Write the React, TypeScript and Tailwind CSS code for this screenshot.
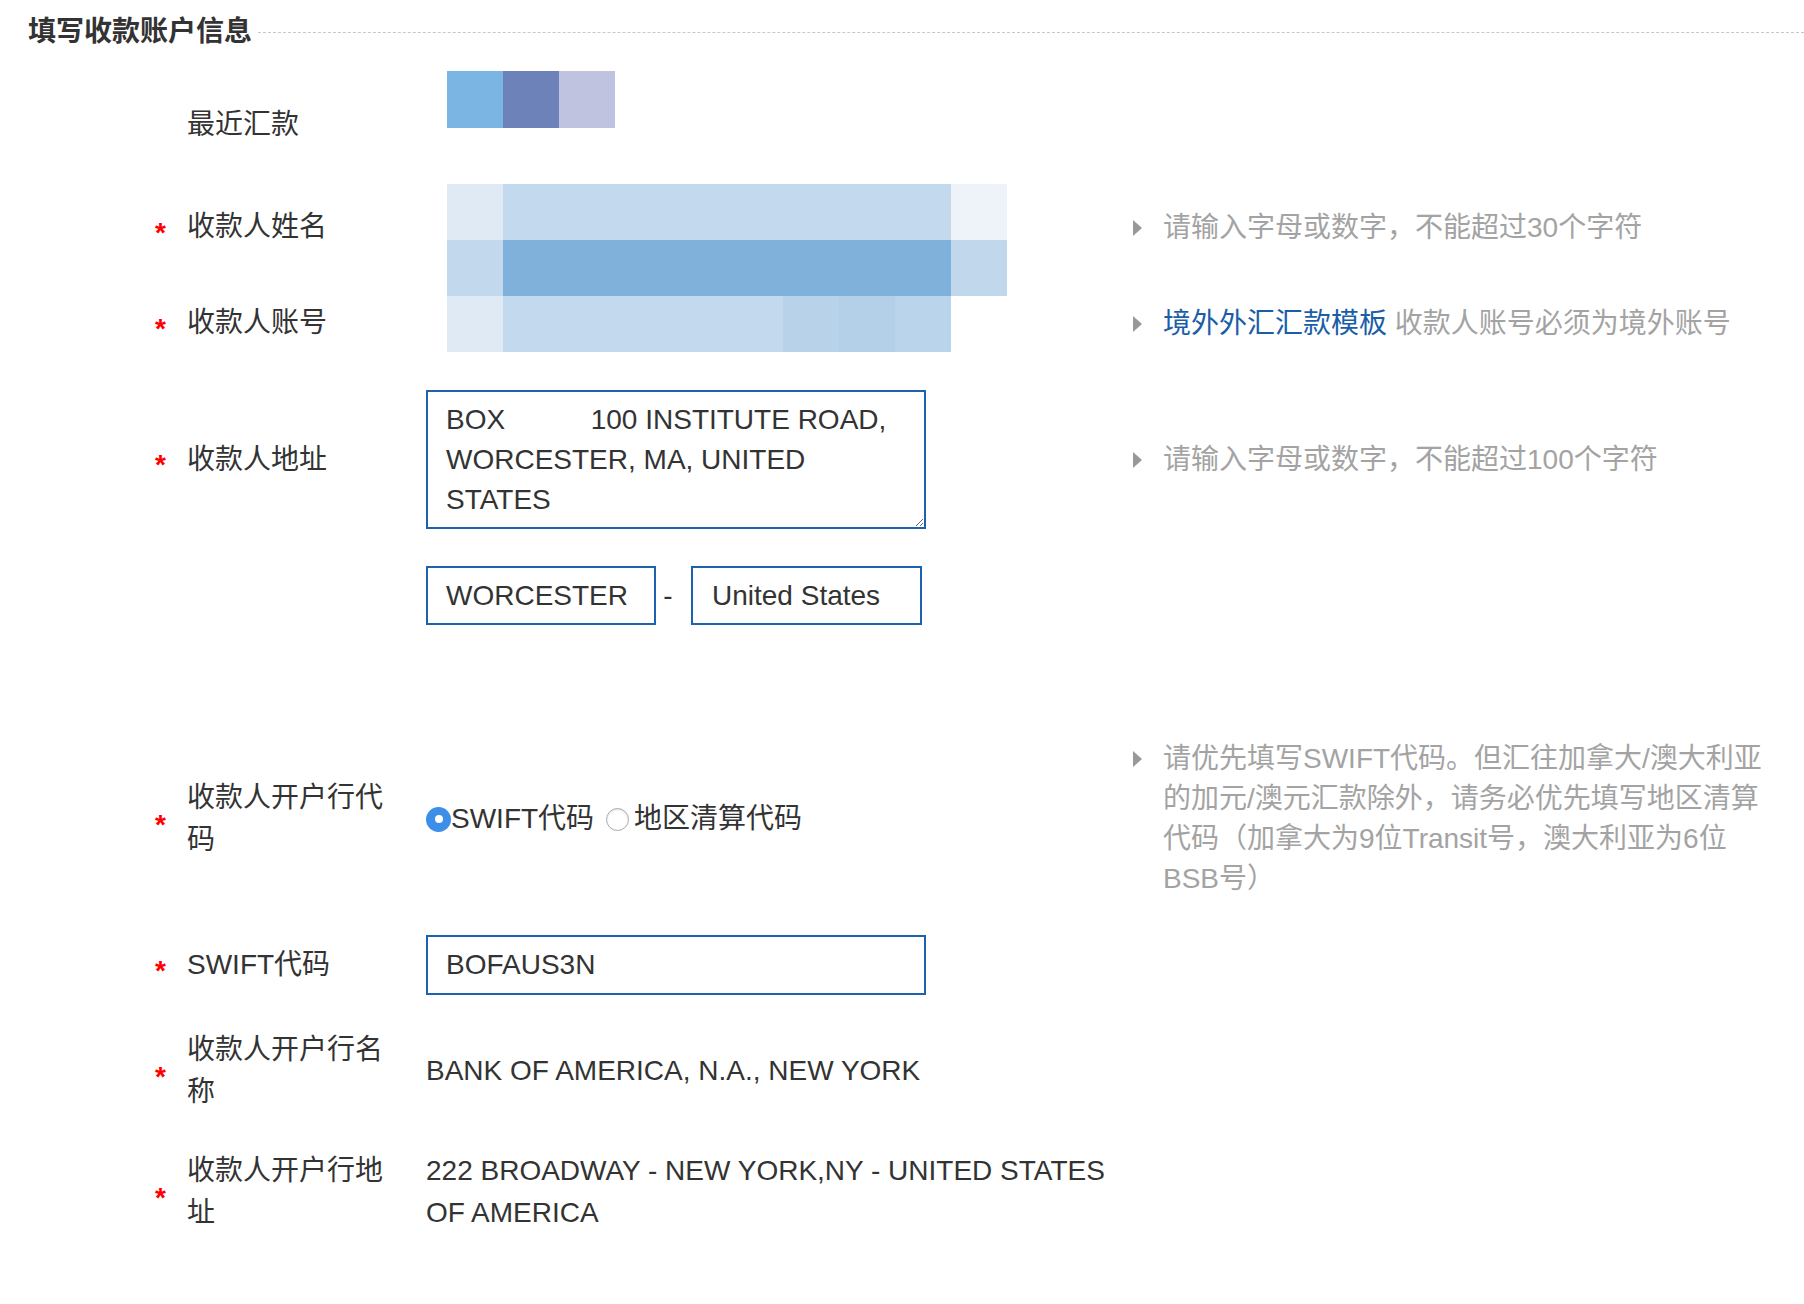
import React from 'react';

const Star = ({ show = true }: { show?: boolean }) => (
  <span className="w-[32px] shrink-0 pt-[11px] text-[28px] font-bold leading-none text-[#f00]">{show ? '*' : ''}</span>
);

const Label: React.FC<{ children?: React.ReactNode }> = ({ children }) => (
  <div className="w-[239px] shrink-0 pr-[39px] text-[28px] leading-[42px] text-[#333]">{children}</div>
);

const Hint: React.FC<{ children?: React.ReactNode }> = ({ children }) => (
  <div className="flex items-start">
    <div className="flex h-[40px] w-[30px] shrink-0 items-center">
      <span className="h-0 w-0 border-y-[8px] border-l-[9px] border-y-transparent border-l-[#999]" />
    </div>
    <div className="whitespace-nowrap text-[28px] leading-[40px] text-[#a3a3a3]">{children}</div>
  </div>
);

// blurred cells covering the payee name / account fields
const blurRows = [
  ['bg-[#dfeaf5]', 'bg-[#c2d9ee]', 'bg-[#c2d9ee]', 'bg-[#c2d9ee]', 'bg-[#c2d9ee]', 'bg-[#c2d9ee]', 'bg-[#c2d9ee]', 'bg-[#c2d9ee]', 'bg-[#c2d9ee]', 'bg-[#edf3f9]'],
  ['bg-[#c2d8ed]', 'bg-[#80b1da]', 'bg-[#80b1da]', 'bg-[#80b1da]', 'bg-[#80b1da]', 'bg-[#80b1da]', 'bg-[#80b1da]', 'bg-[#80b1da]', 'bg-[#80b1da]', 'bg-[#c0d7ec]'],
  ['bg-[#dfeaf5]', 'bg-[#c2d9ee]', 'bg-[#c2d9ee]', 'bg-[#c2d9ee]', 'bg-[#c2d9ee]', 'bg-[#c2d9ee]', 'bg-[#b8d2ea]', 'bg-[#b4d0e9]', 'bg-[#bad4eb]', 'bg-white'],
];

export default function App() {
  return (
    <div className="min-h-[1304px] w-full bg-white pb-[60px] font-['Liberation_Sans','Noto_Sans_CJK_SC',sans-serif] text-[#333]">
      {/* Section title */}
      <div className="flex items-center pl-[28px] pt-[12px]">
        <h2 className="text-[28px] font-bold leading-[40px] text-[#333]">填写收款账户信息</h2>
        <div className="ml-[6px] flex-1 border-t border-dashed border-[#c8c8c8]" />
      </div>

      <div className="pl-[155px]">
        {/* Recent payees */}
        <div className="mt-[19px] flex items-start">
          <Star show={false} />
          <div className="mt-[33px]">
            <Label>最近汇款</Label>
          </div>
          <div className="ml-[21px] flex">
            <div className="h-[57px] w-[56px] bg-[#7ab5e3]" />
            <div className="h-[57px] w-[56px] bg-[#6c82b8]" />
            <div className="h-[57px] w-[56px] bg-[#c0c3e0]" />
          </div>
        </div>

        {/* Payee name + account (blurred) */}
        <div className="mt-[38px] flex">
          <div className="flex flex-col gap-[54px] pt-[22px]">
            <div className="flex items-center">
              <Star />
              <Label>收款人姓名</Label>
            </div>
            <div className="flex items-center">
              <Star />
              <Label>收款人账号</Label>
            </div>
          </div>
          <div className="w-[707px] shrink-0">
            <div className="ml-[21px] flex flex-col">
              {blurRows.map((row, r) => (
                <div key={r} className="flex">
                  {row.map((c, i) => (
                    <div key={i} className={`h-[56px] w-[56px] ${c}`} />
                  ))}
                </div>
              ))}
            </div>
          </div>
          <div className="flex flex-col gap-[56px] pt-[24px]">
            <Hint>请输入字母或数字，不能超过30个字符</Hint>
            <Hint>
              <span className="text-[#1a5ea8]">境外外汇汇款模板</span> 收款人账号必须为境外账号
            </Hint>
          </div>
        </div>

        {/* Address */}
        <div className="mt-[38px] flex items-center">
          <Star />
          <Label>收款人地址</Label>
          <div className="w-[707px] shrink-0">
            <textarea
              readOnly
              className="block h-[139px] w-[500px] overflow-hidden border-2 border-[#1d62ae] px-[18px] pt-[8px] text-[28px] leading-[40px] text-[#333] outline-none"
              value={'BOX           100 INSTITUTE ROAD,\nWORCESTER, MA, UNITED\nSTATES'}
            />
          </div>
          <Hint>请输入字母或数字，不能超过100个字符</Hint>
        </div>

        <div className="mt-[37px] flex items-center">
          <Star show={false} />
          <Label />
          <div className="flex items-center">
            <div className="flex h-[59px] w-[230px] items-center border-2 border-[#1d62ae] pl-[18px] text-[28px]">WORCESTER</div>
            <span className="w-[24px] text-center text-[28px]">-</span>
            <div className="ml-[11px] flex h-[59px] w-[231px] items-center border-2 border-[#1d62ae] pl-[19px] text-[28px]">United States</div>
          </div>
        </div>

        {/* Bank code type */}
        <div className="mt-[114px] flex items-center">
          <Star />
          <Label>
            收款人开户行代
            <br />
            码
          </Label>
          <div className="flex w-[707px] shrink-0 items-center text-[28px] leading-[40px]">
            <span className="flex h-[25px] w-[25px] items-center justify-center rounded-full bg-[#3b8fe8]">
              <span className="h-[8px] w-[8px] rounded-full bg-white" />
            </span>
            <span>SWIFT代码</span>
            <span className="ml-[12px] mr-[5px] h-[23px] w-[23px] rounded-full border border-[#aaa] bg-white shadow-[inset_0_1px_2px_rgba(0,0,0,0.12)]" />
            <span>地区清算代码</span>
          </div>
          <Hint>
            请优先填写SWIFT代码。但汇往加拿大/澳大利亚
            <br />
            的加元/澳元汇款除外，请务必优先填写地区清算
            <br />
            代码（加拿大为9位Transit号，澳大利亚为6位
            <br />
            BSB号）
          </Hint>
        </div>

        {/* SWIFT */}
        <div className="mt-[36px] flex items-center">
          <Star />
          <Label>SWIFT代码</Label>
          <div className="w-[707px] shrink-0">
            <div className="flex h-[60px] w-[500px] items-center border-2 border-[#1d62ae] pl-[18px] text-[28px]">BOFAUS3N</div>
          </div>
        </div>

        {/* Bank name */}
        <div className="mt-[34px] flex items-center">
          <Star />
          <Label>
            收款人开户行名
            <br />
            称
          </Label>
          <div className="w-[707px] shrink-0 text-[28px] leading-[42px]">BANK OF AMERICA, N.A., NEW YORK</div>
        </div>

        {/* Bank address */}
        <div className="mt-[37px] flex items-center">
          <Star />
          <Label>
            收款人开户行地
            <br />
            址
          </Label>
          <div className="w-[707px] shrink-0 text-[28px] leading-[42px]">
            222 BROADWAY - NEW YORK,NY - UNITED STATES
            <br />
            OF AMERICA
          </div>
        </div>
      </div>
    </div>
  );
}
